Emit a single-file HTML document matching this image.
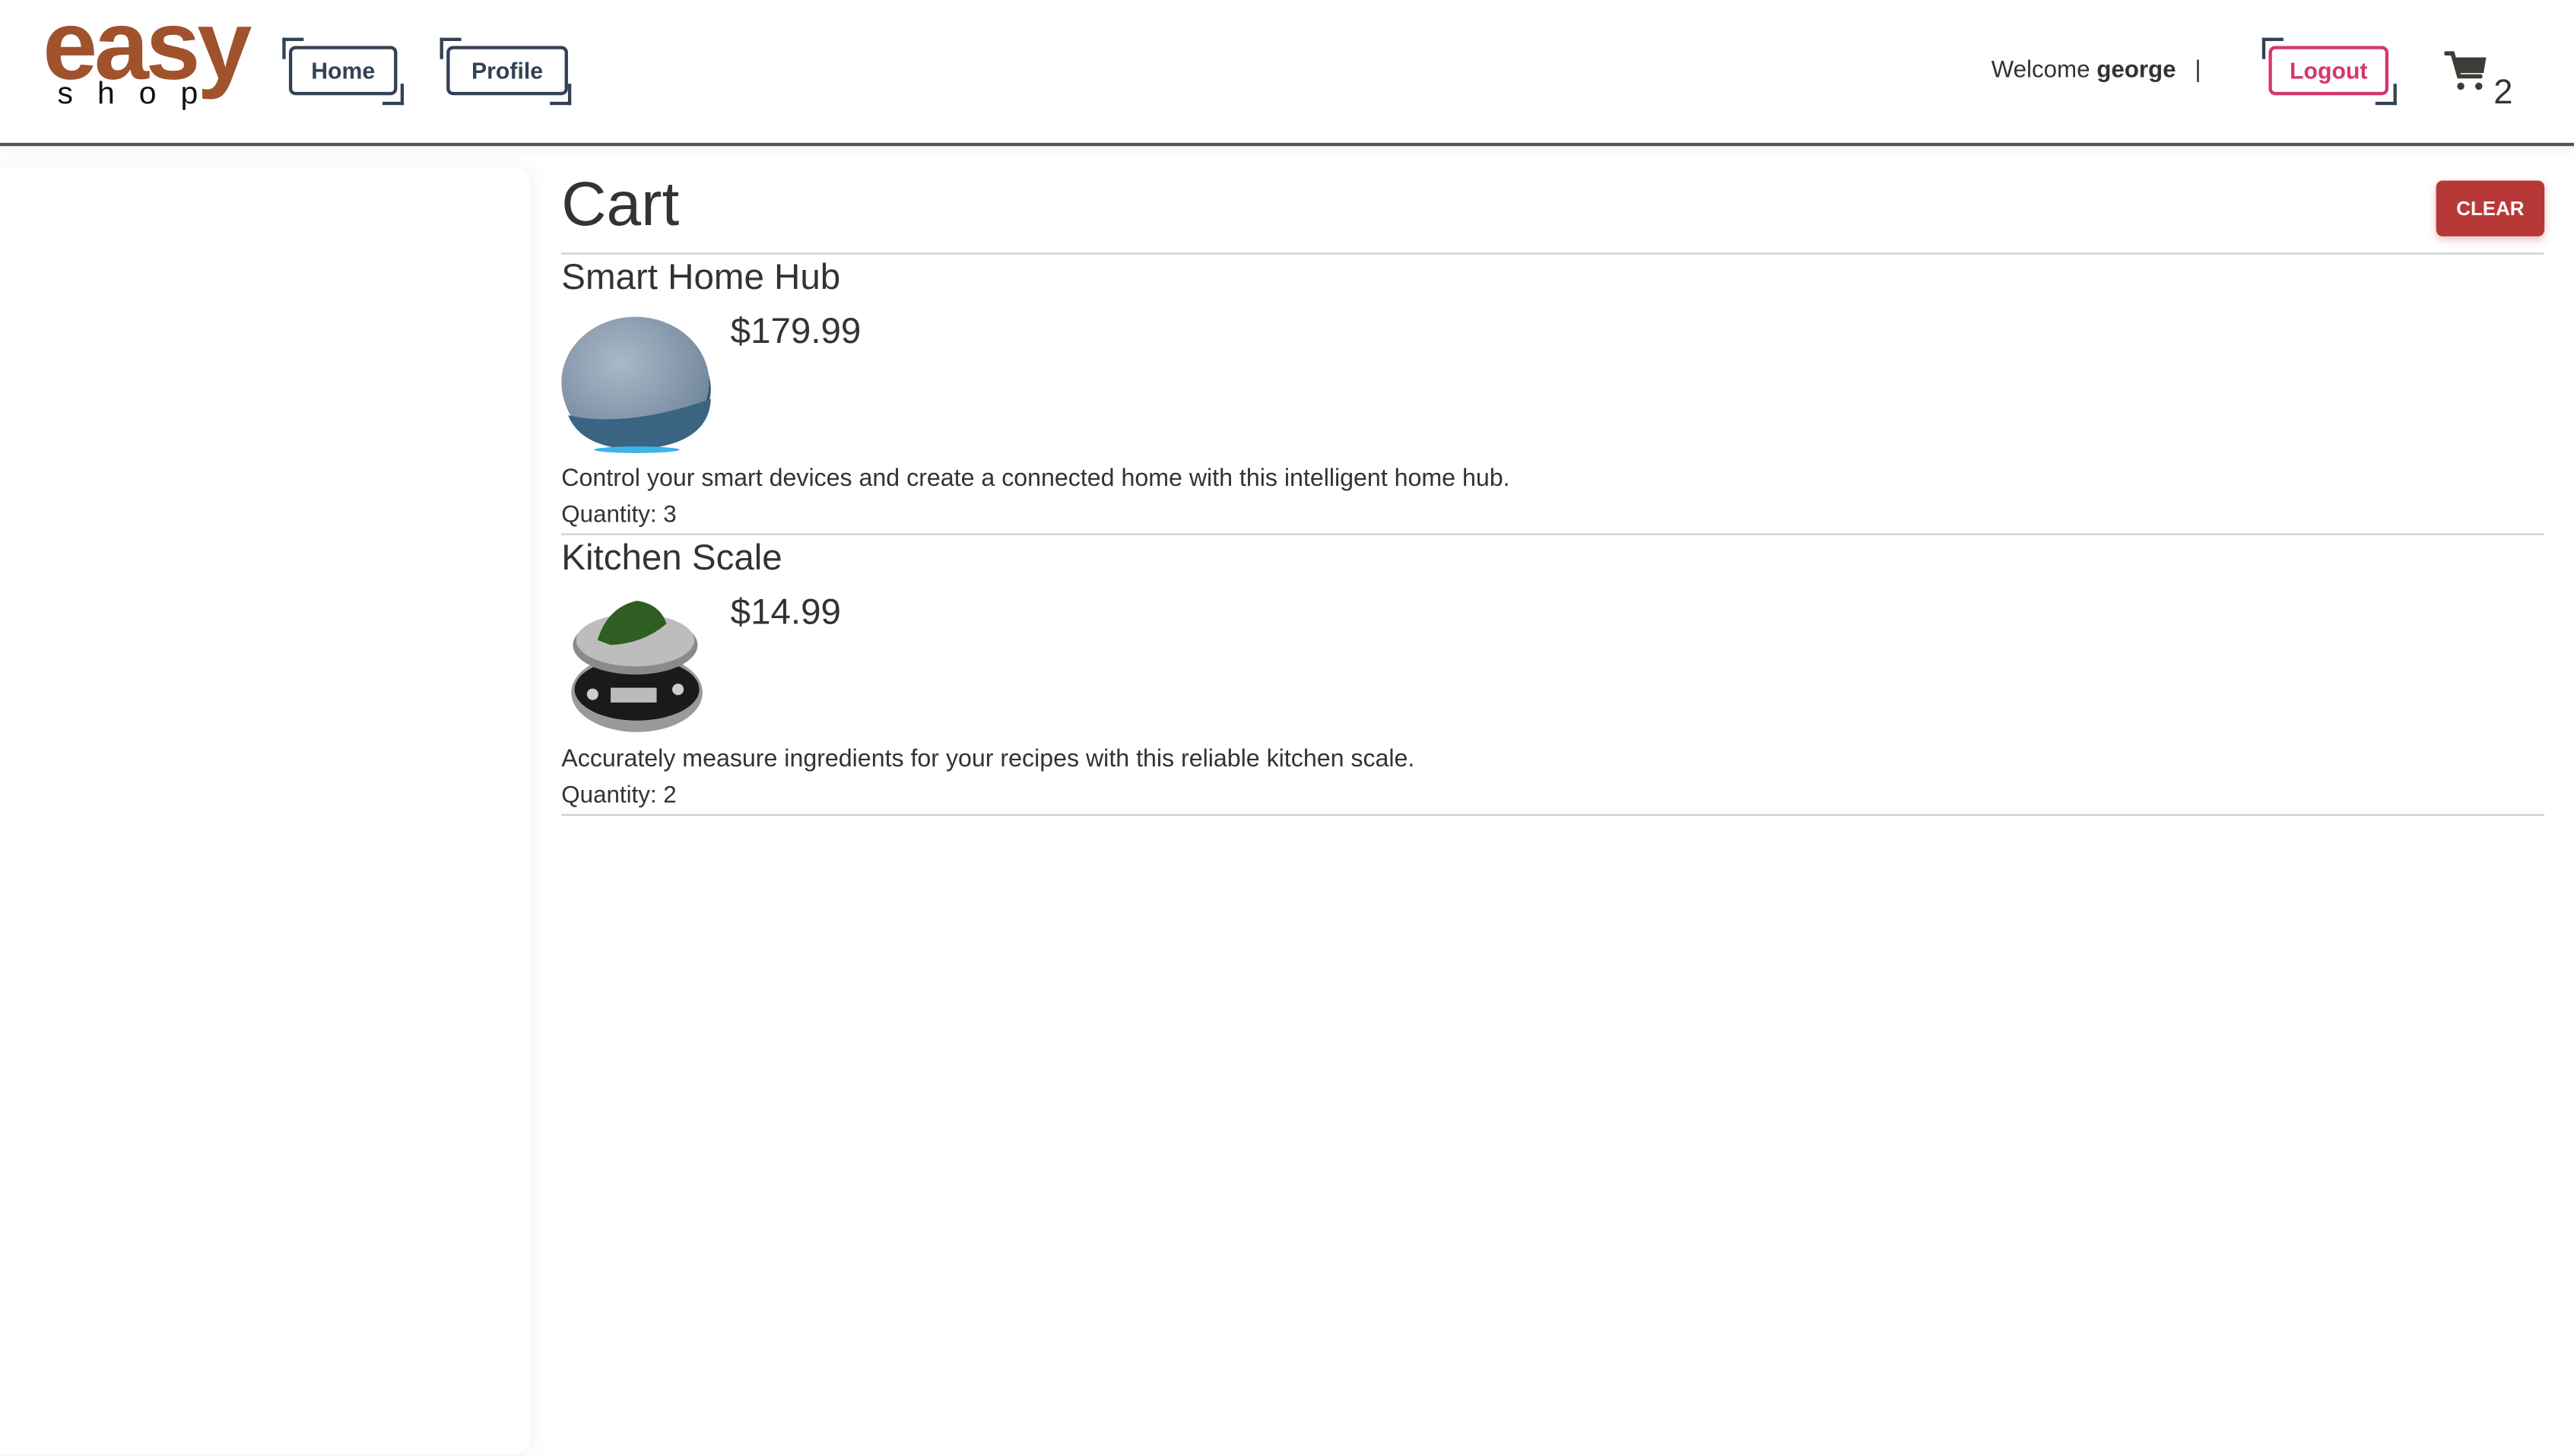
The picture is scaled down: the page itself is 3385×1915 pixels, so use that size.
<!DOCTYPE html>
<html><head><meta charset="utf-8">
<style>
html,body{margin:0;padding:0;background:#fff;overflow:hidden}
body{width:3385px;height:1915px;position:relative}
#w{position:absolute;left:0;top:0;width:1568px;height:887px;transform:scale(2.15880);transform-origin:0 0;font-family:"Liberation Sans",sans-serif;color:#333}
.a{position:absolute}
header{position:absolute;left:0;top:0;width:1568px;height:87px;border-bottom:2px solid #555;box-shadow:0 3px 8px rgba(0,0,0,.06);background:#fff}
.btn{position:absolute;top:28px;height:26px;border:2px solid #334155;border-radius:4px;font-weight:bold;font-size:14px;line-height:26px;text-align:center;color:#334155}
.tl{position:absolute;width:11px;height:11px;border-top:2px solid #334155;border-left:2px solid #334155}
.br{position:absolute;width:11px;height:11px;border-bottom:2px solid #334155;border-right:2px solid #334155}
.side{position:absolute;left:-6px;top:102px;width:329px;height:784px;background:#fff;border-radius:10px;box-shadow:0 0 12px rgba(120,120,170,.12)}
hr{position:absolute;left:342px;width:1208px;margin:0;border:0;border-top:1.5px solid #ccc}
.t{position:absolute;left:342px;white-space:nowrap}
</style></head><body><div id="w">
<header>
<div class="a" style="left:26px;top:-2px;font-size:60px;font-weight:bold;color:#a0522d;letter-spacing:-2px;line-height:60px">easy</div>
<div class="a" style="left:35px;top:48px;font-size:19px;color:#111;letter-spacing:14.8px;line-height:19px">shop</div>
<div class="tl" style="left:172px;top:23px"></div>
<div class="btn" style="left:176px;width:62px">Home</div>
<div class="br" style="left:233px;top:51px"></div>
<div class="tl" style="left:268px;top:23px"></div>
<div class="btn" style="left:272px;width:70px">Profile</div>
<div class="br" style="left:335px;top:51px"></div>
<div class="a" style="left:1213px;top:35px;font-size:14.5px;color:#333">Welcome <b>george</b></div>
<div class="a" style="left:1337px;top:35px;font-size:14.5px;color:#333">|</div>
<div class="tl" style="left:1378px;top:23px"></div>
<div class="btn" style="left:1382px;width:69px;border-color:#d63570;color:#d63570">Logout</div>
<div class="br" style="left:1447px;top:51px"></div>
<svg class="a" style="left:1489px;top:31px" width="28" height="26" viewBox="0 0 28 26"><path d="M1 1.5h4l4 14h13" fill="none" stroke="#3d3d38" stroke-width="2.6" stroke-linecap="round"/><path d="M5.5 4h20l-1.6 9.5H8.3z" fill="#3d3d38"/><circle cx="10" cy="21.5" r="2.2" fill="#3d3d38"/><circle cx="21" cy="21.5" r="2.2" fill="#3d3d38"/></svg>
<div class="a" style="left:1519px;top:45px;font-size:21px;color:#333">2</div>
</header>
<div class="side"></div>
<div class="t" style="top:104px;font-size:38px;color:#333">Cart</div>
<div class="a" style="left:1484px;top:110px;width:66px;height:34px;background:#b83838;border-radius:4px;box-shadow:0 2px 5px rgba(184,56,56,.3);color:#fff;font-weight:bold;font-size:12px;line-height:34px;text-align:center">CLEAR</div>
<hr style="top:154px">
<div class="t" style="top:156px;font-size:22px">Smart Home Hub</div>
<svg class="a" style="left:342px;top:187px" width="92" height="92" viewBox="0 0 92 92">
<defs><radialGradient id="g1" cx=".4" cy=".35" r=".7"><stop offset="0" stop-color="#a9b9c8"/><stop offset="1" stop-color="#6f8499"/></radialGradient></defs>
<ellipse cx="46" cy="50" rx="45" ry="36" fill="#2e5674"/>
<ellipse cx="45" cy="46" rx="45" ry="40" fill="url(#g1)"/>
<path d="M4 66 Q40 74 91 56 Q90 84 46 87 Q12 86 4 66z" fill="#3a6482"/>
<ellipse cx="46" cy="87" rx="26" ry="2" fill="#3cb4e8"/>
</svg>
<div class="t" style="left:445px;top:189px;font-size:22px">$179.99</div>
<div class="t" style="top:284px;font-size:14.9px">Control your smart devices and create a connected home with this intelligent home hub.</div>
<div class="t" style="top:306px;font-size:14.5px">Quantity: 3</div>
<hr style="top:325px">
<div class="t" style="top:327px;font-size:22px">Kitchen Scale</div>
<svg class="a" style="left:342px;top:360px" width="90" height="90" viewBox="0 0 90 90">
<ellipse cx="46" cy="62" rx="40" ry="24" fill="#9a9a9a"/>
<ellipse cx="46" cy="60" rx="38" ry="19" fill="#1a1a1a"/>
<rect x="30" y="59" width="28" height="9" fill="#bbb"/>
<circle cx="19" cy="63" r="3.5" fill="#ccc"/><circle cx="71" cy="60" r="3.5" fill="#ccc"/>
<ellipse cx="45" cy="33" rx="38" ry="18" fill="#8a8a8a"/>
<ellipse cx="45" cy="30" rx="36" ry="16" fill="#bdbdbd"/>
<path d="M22 30 Q28 10 46 6 Q60 8 64 20 Q50 32 30 33z" fill="#2f5e22"/>
</svg>
<div class="t" style="left:445px;top:360px;font-size:22px">$14.99</div>
<div class="t" style="top:455px;font-size:14.9px">Accurately measure ingredients for your recipes with this reliable kitchen scale.</div>
<div class="t" style="top:477px;font-size:14.5px">Quantity: 2</div>
<hr style="top:496px">
</div></body></html>
